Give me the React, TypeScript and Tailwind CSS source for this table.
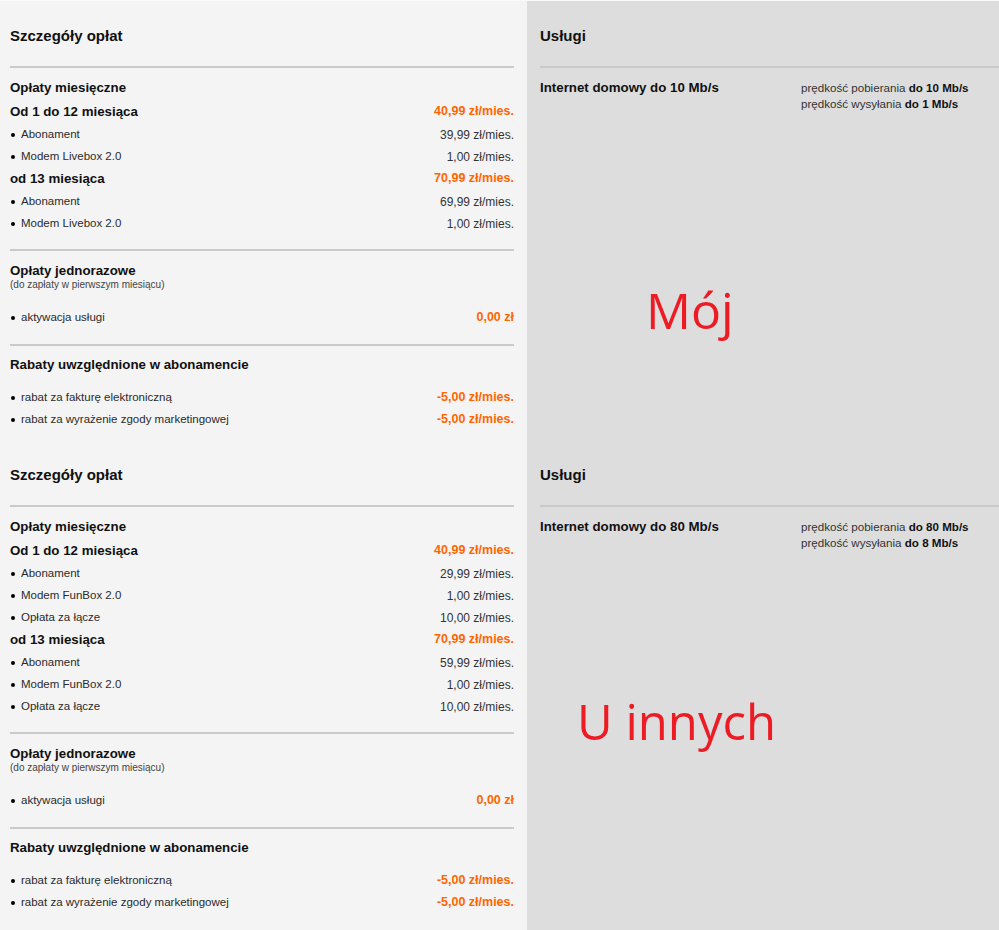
const font = { fontFamily: '"Liberation Sans", Arial, sans-serif' };

type Item = [string, string];
type Period = { label: string; total: string; items: Item[] };
type Offer = {
  periods: Period[];
  service: string;
  down: string;
  up: string;
  note: string;
  noteClass: string;
};

const offers: Offer[] = [
  {
    periods: [
      {
        label: "Od 1 do 12 miesiąca",
        total: "40,99 zł/mies.",
        items: [
          ["Abonament", "39,99 zł/mies."],
          ["Modem Livebox 2.0", "1,00 zł/mies."],
        ],
      },
      {
        label: "od 13 miesiąca",
        total: "70,99 zł/mies.",
        items: [
          ["Abonament", "69,99 zł/mies."],
          ["Modem Livebox 2.0", "1,00 zł/mies."],
        ],
      },
    ],
    service: "Internet domowy do 10 Mb/s",
    down: "do 10 Mb/s",
    up: "do 1 Mb/s",
    note: "Mój",
    noteClass: "left-[119px] top-[284px] text-[50px] leading-[50px]",
  },
  {
    periods: [
      {
        label: "Od 1 do 12 miesiąca",
        total: "40,99 zł/mies.",
        items: [
          ["Abonament", "29,99 zł/mies."],
          ["Modem FunBox 2.0", "1,00 zł/mies."],
          ["Opłata za łącze", "10,00 zł/mies."],
        ],
      },
      {
        label: "od 13 miesiąca",
        total: "70,99 zł/mies.",
        items: [
          ["Abonament", "59,99 zł/mies."],
          ["Modem FunBox 2.0", "1,00 zł/mies."],
          ["Opłata za łącze", "10,00 zł/mies."],
        ],
      },
    ],
    service: "Internet domowy do 80 Mb/s",
    down: "do 80 Mb/s",
    up: "do 8 Mb/s",
    note: "U innych",
    noteClass: "left-[50px] top-[257px] text-[49px] leading-[49px]",
  },
];

function Bullet({ label, value, accent }: { label: string; value: string; accent?: boolean }) {
  return (
    <div className="flex h-[22px] items-center justify-between pt-[3px]">
      <div className="flex items-center text-[11.5px] text-[#2b2b2b]">
        <span className="ml-px mr-[6px] size-[4px] rounded-full bg-black" />
        {label}
      </div>
      <span className={accent ? "text-[12.5px] font-bold text-[#ff6600]" : "text-[12px] text-[#333]"}>{value}</span>
    </div>
  );
}

function Offer({ offer, last }: { offer: Offer; last?: boolean }) {
  return (
    <div className={last ? "grid flex-1 grid-cols-[527px_1fr]" : "grid grid-cols-[527px_1fr]"}>
      <div className="bg-[#f4f4f4] pb-[11px] pl-[10px] pr-[13px] pt-[25px]">
        <h2 className="h-[20px] text-[15px] font-bold leading-[20px] text-[#111]">Szczegóły opłat</h2>

        <div className="mt-[20px] border-t-2 border-[#cacaca] pt-[9px]">
          <div className="flex h-[22px] items-center text-[13.3px] font-bold text-[#111]">Opłaty miesięczne</div>
          {offer.periods.map((p) => (
            <div key={p.label}>
              <div className="flex h-[23px] items-center justify-between pt-[2px]">
                <span className="text-[13.3px] font-bold text-[#111]">{p.label}</span>
                <span className="text-[12.5px] font-bold text-[#ff6600]">{p.total}</span>
              </div>
              {p.items.map(([l, v]) => (
                <Bullet key={l} label={l} value={v} />
              ))}
            </div>
          ))}
        </div>

        <div className="mt-[16px] border-t-2 border-[#cacaca] pt-[12px]">
          <div className="h-[16px] text-[13.3px] font-bold leading-[16px] text-[#111]">Opłaty jednorazowe</div>
          <div className="h-[12px] text-[10px] leading-[12px] text-[#444]">(do zapłaty w pierwszym miesiącu)</div>
          <div className="mt-[14px]">
            <Bullet label="aktywacja usługi" value="0,00 zł" accent />
          </div>
        </div>

        <div className="mt-[17px] border-t-2 border-[#cacaca] pt-[8px]">
          <div className="flex h-[22px] items-center text-[13.3px] font-bold text-[#111]">
            Rabaty uwzględnione w abonamencie
          </div>
          <div className="mt-[9px]">
            <Bullet label="rabat za fakturę elektroniczną" value="-5,00 zł/mies." accent />
            <Bullet label="rabat za wyrażenie zgody marketingowej" value="-5,00 zł/mies." accent />
          </div>
        </div>
      </div>

      <div className="relative bg-[#dddddd] pl-[13px] pt-[25px]">
        <h2 className="h-[20px] text-[15px] font-bold leading-[20px] text-[#111]">Usługi</h2>
        <div className="mt-[20px] flex border-t-2 border-[#c9c9c9] pt-[12px]">
          <div className="w-[261px] text-[13.3px] font-bold leading-[16px] text-[#111]">{offer.service}</div>
          <div className="text-[11.6px] leading-[16px] text-[#333]">
            <div>
              prędkość pobierania <b className="text-[#111]">{offer.down}</b>
            </div>
            <div>
              prędkość wysyłania <b className="text-[#111]">{offer.up}</b>
            </div>
          </div>
        </div>
        <span
          className={`absolute ${offer.noteClass} text-[#ed1c24]`}
          style={{ fontFamily: '"Open Sans", sans-serif' }}
        >
          {offer.note}
        </span>
      </div>
    </div>
  );
}

export default function App() {
  return (
    <div className="flex h-[930px] w-[999px] flex-col overflow-hidden border-t border-[#fafafa]" style={font}>
      {offers.map((o, i) => (
        <Offer key={o.note} offer={o} last={i === offers.length - 1} />
      ))}
    </div>
  );
}
